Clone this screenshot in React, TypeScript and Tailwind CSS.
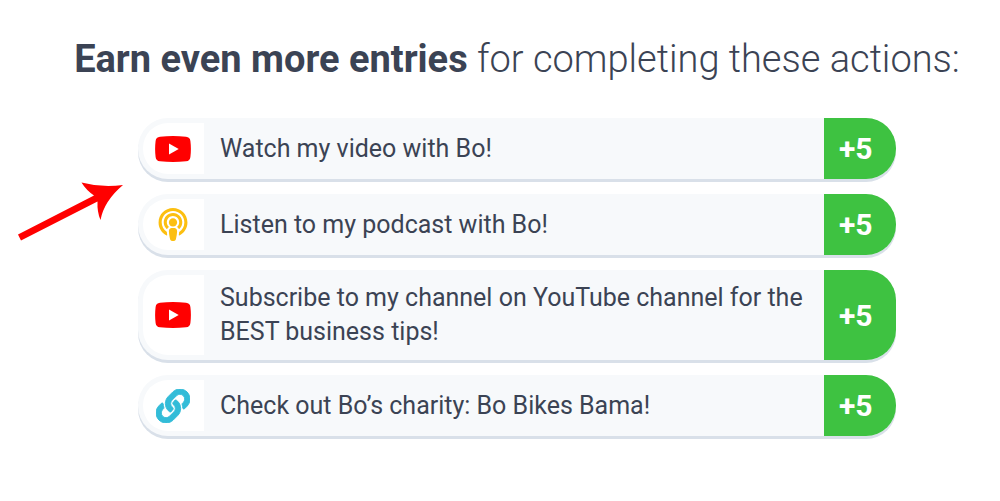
import type { ReactNode } from 'react';
import { FaLink, FaPodcast } from 'react-icons/fa';

function YouTubeIcon() {
  return (
    <svg viewBox="0 0 36 26" className="w-9 h-[26px]" aria-hidden="true">
      <path
        d="M5 .7Q18-.5 31 .7Q35 1 35.4 5Q36.4 13 35.4 21Q35 25 31 25.3Q18 26.5 5 25.3Q1 25 .6 21Q-.4 13 .6 5Q1 1 5 .7Z"
        fill="#ff0000"
      />
      <path d="M14 7.5L23.7 13L14 18.5Z" fill="#fff" />
    </svg>
  );
}

type Action = {
  id: string;
  label: string;
  points: number;
  icon: ReactNode;
};

const ACTIONS: Action[] = [
  { id: 'video', label: 'Watch my video with Bo!', points: 5, icon: <YouTubeIcon /> },
  {
    id: 'podcast',
    label: 'Listen to my podcast with Bo!',
    points: 5,
    icon: <FaPodcast className="w-[30px] h-[33px] text-[#fcbf10]" />,
  },
  {
    id: 'channel',
    label: 'Subscribe to my channel on YouTube channel for the BEST business tips!',
    points: 5,
    icon: <YouTubeIcon />,
  },
  {
    id: 'charity',
    label: 'Check out Bo’s charity: Bo Bikes Bama!',
    points: 5,
    icon: <FaLink className="w-[34px] h-[34px] stroke-[#33bcd8] stroke-[14px] text-[#33bcd8]" />,
  },
];

function ActionRow({ action }: { action: Action }) {
  return (
    <a
      href={`#${action.id}`}
      className="flex min-h-[61px] overflow-hidden rounded-[30px] bg-[#f7f9fb] shadow-[0_3px_0_#d9e0e9]"
    >
      <span className="m-[5px] mr-0 flex w-[61px] shrink-0 items-center justify-center rounded-l-[25px] bg-white pr-[2px]">
        {action.icon}
      </span>
      <span className="flex-1 self-center px-4 py-[11px] text-[25px] leading-[34px]">
        {action.label}
      </span>
      <span className="flex w-[72px] shrink-0 items-center bg-[#3ec241] pl-[15px] text-[30px] font-bold text-white">
        +{action.points}
      </span>
    </a>
  );
}

export default function App() {
  return (
    <main className="relative min-h-screen bg-white pt-9 pb-16 pl-[34px] font-['Roboto',sans-serif] text-[#3b4354]">
      <h1 className="text-center text-[38px] leading-[46px] font-light">
        <strong className="font-bold">Earn even more entries</strong> for completing these actions:
      </h1>

      <div className="mx-auto mt-9 flex max-w-[758px] flex-col gap-[15px]">
        {ACTIONS.map((action) => (
          <ActionRow key={action.id} action={action} />
        ))}
      </div>

      {/* Arrow pointing at the list */}
      <svg
        viewBox="0 0 106 60"
        className="absolute top-[181px] left-[18px] h-[60px] w-[106px]"
        aria-hidden="true"
      >
        <path
          d="M0 53.5L76 14.5Q68 9 63.5 1.5Q84 7 105 4Q86 20 82.5 39Q79 31 79.5 20.5L3 59.5Z"
          fill="#ff0000"
        />
      </svg>
    </main>
  );
}
